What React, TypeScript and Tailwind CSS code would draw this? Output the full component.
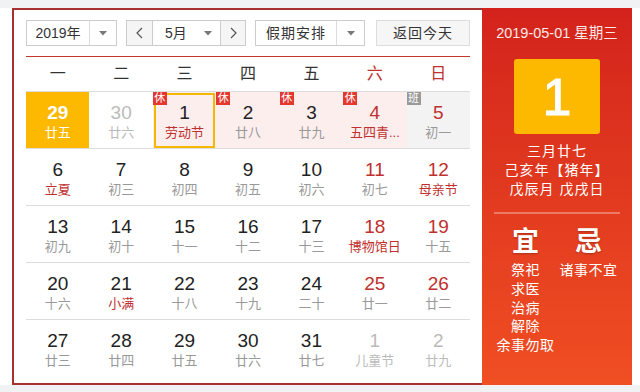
import React from 'react';

type Day = {
  n: number;
  lunar: string;
  other?: boolean;
  weekend?: boolean;
  fest?: boolean;
  badge?: '休' | '班';
  holiday?: boolean;
  today?: boolean;
  selected?: boolean;
};

const weeks: Day[][] = [
  [
    { n: 29, lunar: '廿五', other: true, today: true },
    { n: 30, lunar: '廿六', other: true },
    { n: 1, lunar: '劳动节', fest: true, badge: '休', holiday: true, selected: true },
    { n: 2, lunar: '廿八', badge: '休', holiday: true },
    { n: 3, lunar: '廿九', badge: '休', holiday: true },
    { n: 4, lunar: '五四青...', fest: true, weekend: true, badge: '休', holiday: true },
    { n: 5, lunar: '初一', weekend: true, badge: '班' },
  ],
  [
    { n: 6, lunar: '立夏', fest: true },
    { n: 7, lunar: '初三' },
    { n: 8, lunar: '初四' },
    { n: 9, lunar: '初五' },
    { n: 10, lunar: '初六' },
    { n: 11, lunar: '初七', weekend: true },
    { n: 12, lunar: '母亲节', weekend: true, fest: true },
  ],
  [
    { n: 13, lunar: '初九' },
    { n: 14, lunar: '初十' },
    { n: 15, lunar: '十一' },
    { n: 16, lunar: '十二' },
    { n: 17, lunar: '十三' },
    { n: 18, lunar: '博物馆日', weekend: true, fest: true },
    { n: 19, lunar: '十五', weekend: true },
  ],
  [
    { n: 20, lunar: '十六' },
    { n: 21, lunar: '小满', fest: true },
    { n: 22, lunar: '十八' },
    { n: 23, lunar: '十九' },
    { n: 24, lunar: '二十' },
    { n: 25, lunar: '廿一', weekend: true },
    { n: 26, lunar: '廿二', weekend: true },
  ],
  [
    { n: 27, lunar: '廿三' },
    { n: 28, lunar: '廿四' },
    { n: 29, lunar: '廿五' },
    { n: 30, lunar: '廿六' },
    { n: 31, lunar: '廿七' },
    { n: 1, lunar: '儿童节', other: true },
    { n: 2, lunar: '廿九', other: true },
  ],
];

function Caret() {
  return (
    <svg width="8" height="5" viewBox="0 0 8 5" className="shrink-0">
      <path d="M0 0h8L4 4.5z" fill="#777" />
    </svg>
  );
}

function Chevron({ dir }: { dir: 'l' | 'r' }) {
  return (
    <svg width="7" height="12" viewBox="0 0 7 12">
      <path d={dir === 'l' ? 'M6 1L1 6l5 5' : 'M1 1l5 5-5 5'} fill="none" stroke="#555" strokeWidth="1.2" />
    </svg>
  );
}

function Cell({ d }: { d: Day }) {
  let numColor = 'text-[#222]';
  let lunarColor = 'text-[#999]';
  if (d.weekend) numColor = 'text-[#c0302e]';
  if (d.fest) lunarColor = 'text-[#c0302e]';
  if (d.other) {
    numColor = 'text-[#bbb]';
    lunarColor = 'text-[#bbb]';
  }
  if (d.today) {
    numColor = 'text-white font-bold';
    lunarColor = 'text-white';
  }
  const bg = d.today
    ? 'bg-[#fdb800]'
    : d.holiday
    ? 'bg-[#fdeeee]'
    : d.badge === '班'
    ? 'bg-[#f3f3f3]'
    : '';
  return (
    <div className={`relative h-[56px] flex flex-col items-center pt-[8px] ${bg}`}>
      {d.selected && <div className="absolute inset-x-[1px] top-[1px] bottom-0 border-2 border-[#f5b800]" />}
      {d.badge && (
        <span
          className={`absolute left-0 top-0 w-[14px] h-[13px] flex items-center justify-center text-[11px] leading-none text-white ${
            d.badge === '休' ? 'bg-[#e3372f]' : 'bg-[#999]'
          }`}
        >
          {d.badge}
        </span>
      )}
      <span className={`text-[19px] leading-[25px] ${numColor}`}>{d.n}</span>
      <span className={`text-[13px] leading-[16px] ${lunarColor}`}>{d.lunar}</span>
    </div>
  );
}

export default function App() {
  const font = { fontFamily: '"Liberation Sans", "Noto Sans CJK SC", sans-serif' };
  return (
    <div className="w-[640px] h-[392px] bg-white flex flex-col overflow-hidden" style={font}>
      <div className="h-2 bg-[#f1f2f4]" />
      <div className="flex ml-3 h-[377px]">
        {/* left calendar */}
        <div className="w-[470px] border-2 border-r-0 border-[#a8302e] bg-white pt-[10px] px-3">
          <div className="flex items-center h-[26px] text-[14px] text-[#333]">
            <div className="w-[91px] h-full flex border border-[#ccc] bg-white">
              <div className="flex-1 flex items-center justify-center border-r border-[#ddd]">2019年</div>
              <div className="w-[26px] flex items-center justify-center"><Caret /></div>
            </div>
            <div className="ml-[9px] w-[120px] h-full flex border border-[#ccc]">
              <div className="w-[26px] flex items-center justify-center bg-[#f5f5f5] border-r border-[#ccc]"><Chevron dir="l" /></div>
              <div className="flex-1 flex items-center bg-white pl-[12px] pr-[8px]">
                <span className="flex-1">5月</span>
                <Caret />
              </div>
              <div className="w-[25px] flex items-center justify-center bg-[#f5f5f5] border-l border-[#ccc]"><Chevron dir="r" /></div>
            </div>
            <div className="ml-[9px] w-[110px] h-full flex border border-[#ccc] bg-white">
              <div className="flex-1 flex items-center justify-center border-r border-[#ddd] tracking-[1px]">假期安排</div>
              <div className="w-[27px] flex items-center justify-center"><Caret /></div>
            </div>
            <div className="ml-[11px] w-[94px] h-full flex items-center justify-center border border-[#ddd] bg-[#f6f6f6] tracking-[1px]">返回今天</div>
          </div>
          <div className="mt-[10px] h-px bg-[#c0392b]" />
          <div className="grid grid-cols-7 h-[34px] items-center text-[16px]">
            {['一', '二', '三', '四', '五', '六', '日'].map((w, i) => (
              <div key={w} className={`text-center ${i >= 5 ? 'text-[#c0302e]' : 'text-[#333]'}`}>{w}</div>
            ))}
          </div>
          <div className="border-t border-[#ddd]">
            {weeks.map((row, i) => (
              <div key={i} className={`grid grid-cols-7 ${i < 4 ? 'border-b border-[#ddd]' : ''}`}>
                {row.map((d, j) => (
                  <Cell key={j} d={d} />
                ))}
              </div>
            ))}
          </div>
        </div>
        {/* right panel */}
        <div className="w-[150px] bg-linear-to-b from-[#d3221c] to-[#f04e23] text-white flex flex-col items-center">
          <div className="mt-[16px] text-[14.5px] leading-[18px] text-[#fde8e4]">2019-05-01 星期三</div>
          <div className="mt-[17px] w-[86px] h-[75px] rounded-[3px] bg-[#fdb800] flex items-center justify-center text-[52px] leading-none [-webkit-text-stroke:1px_white]">1</div>
          <div className="mt-[8px] text-[14px] leading-[19px] text-center tracking-[1px]">
            <div>三月廿七</div>
            <div>己亥年【猪年】</div>
            <div>戊辰月 戊戌日</div>
          </div>
          <div className="mt-[13px] w-[126px] h-[2px] bg-[#ee7a66]" />
          <div className="mt-[12px] flex w-[126px]">
            <div className="w-[63px] flex flex-col items-center">
              <div className="text-[27px] leading-[32px] font-bold [text-shadow:0_1px_2px_rgba(0,0,0,0.25)]">宜</div>
              <div className="mt-[3px] text-[14px] leading-[18.75px] text-center whitespace-nowrap tracking-[0.5px]">
                <div>祭祀</div>
                <div>求医</div>
                <div>治病</div>
                <div>解除</div>
                <div>余事勿取</div>
              </div>
            </div>
            <div className="w-[63px] flex flex-col items-center">
              <div className="text-[27px] leading-[32px] font-bold [text-shadow:0_1px_2px_rgba(0,0,0,0.25)]">忌</div>
              <div className="mt-[3px] text-[14px] leading-[18.75px] whitespace-nowrap tracking-[0.5px]">诸事不宜</div>
            </div>
          </div>
        </div>
      </div>
      <div className="flex-1 bg-[#f1f2f4]" />
    </div>
  );
}
